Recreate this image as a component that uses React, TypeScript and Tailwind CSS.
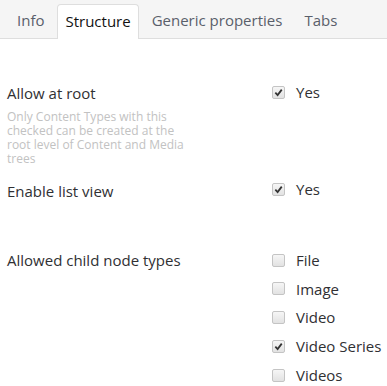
import React from 'react'

const tabs = ['Info', 'Structure', 'Generic properties', 'Tabs']
const children = [
  { name: 'File', checked: false },
  { name: 'Image', checked: false },
  { name: 'Video', checked: false },
  { name: 'Video Series', checked: true },
  { name: 'Videos', checked: false },
]

function Box({ checked }: { checked: boolean }) {
  return (
    <span className="flex h-[13px] w-[13px] shrink-0 items-center justify-center rounded-[2px] border border-[#c4c4c4] bg-gradient-to-b from-[#f6f6f6] to-[#e2e2e2]">
      {checked && (
        <svg viewBox="0 0 10 10" className="h-[9px] w-[9px]">
          <path d="M1.5 5.2 L4 7.8 L8.6 1.8" fill="none" stroke="#333" strokeWidth="2" />
        </svg>
      )}
    </span>
  )
}

function Check({ label, checked }: { label: string; checked: boolean }) {
  return (
    <label className="flex h-5 items-center">
      <Box checked={checked} />
      <span className="ml-[11px] text-[15px] text-[#303033]">{label}</span>
    </label>
  )
}

export default function App() {
  return (
    <div className="h-[386px] w-[387px] overflow-hidden bg-white font-['Open_Sans',sans-serif]">
      {/* Tabs */}
      <div className="flex h-[39px] items-end gap-[4px] border-b border-[#dedede] bg-[#f5f5f5] pl-[8px]">
        {tabs.map((t) => (
          <div
            key={t}
            className={
              t === 'Structure'
                ? '-mb-px flex h-[35px] items-center rounded-t-[4px] border border-b-0 border-[#dedede] bg-white px-[7px] pb-[2px] text-[15px] text-[#111]'
                : 'flex h-[34px] items-center px-[9px] pb-[2px] text-[15px] text-[#5a5f6b]'
            }
          >
            {t}
          </div>
        ))}
      </div>

      <div className="pl-[7px] text-[15px] text-[#303033]">
        {/* Allow at root */}
        <div className="mt-[44px] flex">
          <div className="w-[265px]">
            <div className="leading-5">Allow at root</div>
            <div className="mt-[7px] w-[185px] text-[12px] leading-[14px] text-[#c2c2c2]">
              Only Content Types with this checked can be created at the root level of Content and Media trees
            </div>
          </div>
          <div className="-mt-[1px]">
            <Check label="Yes" checked />
          </div>
        </div>

        {/* Enable list view */}
        <div className="mt-[15px] flex">
          <div className="w-[265px] leading-5">Enable list view</div>
          <div className="-mt-[2px]">
            <Check label="Yes" checked />
          </div>
        </div>

        {/* Allowed child node types */}
        <div className="mt-[49px] flex">
          <div className="w-[265px] leading-5">Allowed child node types</div>
          <div className="flex flex-col gap-[8.75px]">
            {children.map((c) => (
              <Check key={c.name} label={c.name} checked={c.checked} />
            ))}
          </div>
        </div>
      </div>
    </div>
  )
}
